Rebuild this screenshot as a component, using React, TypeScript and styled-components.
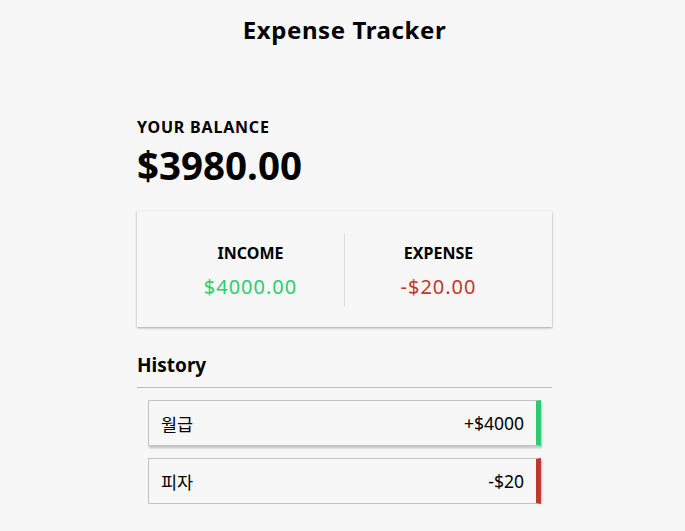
import React from "react";
import styled, { createGlobalStyle } from "styled-components";

const Global = createGlobalStyle`
  html, body { margin: 0; padding: 0; background: #f7f7f7; }
  body { font-family: "Noto Sans", "Noto Sans CJK KR", sans-serif; color: #000; }
  * { box-sizing: border-box; }
`;

const Page = styled.div`
  display: flex;
  flex-direction: column;
  align-items: center;
  padding: 15px 0 0 4px;
`;

const Title = styled.h1`
  margin: 0;
  font-size: 24px;
  line-height: 30px;
  font-weight: 700;
  letter-spacing: 0.6px;
`;

const Container = styled.div`
  width: 415px;
  margin-top: 72px;
  display: flex;
  flex-direction: column;
`;

const Label = styled.h4<{ $wide?: boolean }>`
  margin: 0;
  font-size: 16px;
  line-height: 20px;
  font-weight: 700;
  text-transform: uppercase;
  letter-spacing: ${(p) => (p.$wide ? "0.8px" : "0")};
`;

const Balance = styled.h1`
  margin: 6px 0 0;
  font-size: 38.5px;
  line-height: 44px;
  font-weight: 700;
`;

const Card = styled.div`
  margin-top: 24px;
  background: #f7f7f7;
  box-shadow: 0 1px 3px rgba(0, 0, 0, 0.12), 0 1px 2px rgba(0, 0, 0, 0.24);
  padding: 22px 20px 21px;
  display: flex;
`;

const Col = styled.div<{ $divider?: boolean }>`
  flex: 1;
  text-align: center;
  padding-top: 10px;
  height: 73px;
  border-right: ${(p) => (p.$divider ? "1px solid #dedede" : "none")};
`;

const Money = styled.p<{ $tone: "plus" | "minus" }>`
  margin: 11px 0 0;
  font-size: 20px;
  line-height: 26px;
  letter-spacing: 1px;
  color: ${(p) => (p.$tone === "plus" ? "#2ecc71" : "#c0392b")};
`;

const HistoryTitle = styled.h3`
  margin: 25px 0 0;
  font-size: 19px;
  line-height: 26px;
  font-weight: 700;
  padding-bottom: 9px;
  border-bottom: 1px solid #bbb;
`;

const List = styled.ul`
  list-style: none;
  margin: 12px 0 0;
  padding: 0 11px;
  display: flex;
  flex-direction: column;
  gap: 12px;
`;

const Item = styled.li<{ $tone: "plus" | "minus" }>`
  display: flex;
  justify-content: space-between;
  align-items: center;
  height: 46px;
  padding: 0 12px;
  background: #f7f7f7;
  color: #000;
  font-size: 17.5px;
  border: 1px solid #c4c4c4;
  border-right: 5px solid ${(p) => (p.$tone === "plus" ? "#2ecc71" : "#c0392b")};
  box-shadow: 1px 2px 2px rgba(0, 0, 0, 0.22);
`;

export default function App() {
  return (
    <>
      <Global />
      <Page>
        <Title>Expense Tracker</Title>
        <Container>
          <Label $wide>Your Balance</Label>
          <Balance>$3980.00</Balance>
          <Card>
            <Col $divider>
              <Label>Income</Label>
              <Money $tone="plus">$4000.00</Money>
            </Col>
            <Col>
              <Label>Expense</Label>
              <Money $tone="minus">-$20.00</Money>
            </Col>
          </Card>
          <HistoryTitle>History</HistoryTitle>
          <List>
            <Item $tone="plus">
              <span>월급</span>
              <span>+$4000</span>
            </Item>
            <Item $tone="minus">
              <span>피자</span>
              <span>-$20</span>
            </Item>
          </List>
        </Container>
      </Page>
    </>
  );
}
